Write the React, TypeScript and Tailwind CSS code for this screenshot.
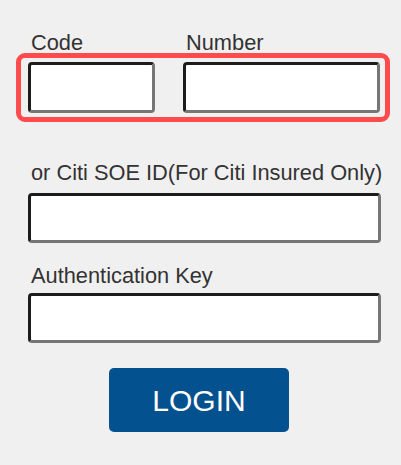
import { useState } from 'react'

const inputCls =
  'block h-[51px] rounded-[4px] border-[3px] border-t-[#1c1c1c] border-l-[#1c1c1c] border-b-[#767676] border-r-[#767676] bg-white px-2 text-[20px] outline-none'

export default function App() {
  const [code, setCode] = useState('')
  const [number, setNumber] = useState('')
  const [soeId, setSoeId] = useState('')
  const [authKey, setAuthKey] = useState('')

  return (
    <div
      className="min-h-[465px] bg-[#f0f0f0] px-4 pt-[31px] text-[#333]"
      style={{ fontFamily: '"Liberation Sans", Arial, sans-serif' }}
    >
      {/* phone */}
      <div className="flex text-[21.8px] leading-[24px]">
        <label className="ml-[15px] w-[155px]">Code</label>
        <label>Number</label>
      </div>
      <div className="-mt-[2px] flex h-[69px] w-[374px] items-center gap-[28px] rounded-[9px] border-[5px] border-[#ff4b4b] pl-[7px]">
        <input
          className={`${inputCls} w-[127px]`}
          value={code}
          onChange={(e) => setCode(e.target.value)}
        />
        <input
          className={`${inputCls} w-[197px]`}
          value={number}
          onChange={(e) => setNumber(e.target.value)}
        />
      </div>

      {/* soe id */}
      <label className="mt-[39px] ml-[15px] block text-[21.8px] leading-[24px]">
        or Citi SOE ID(For Citi Insured Only)
      </label>
      <input
        className={`${inputCls} mt-[8px] ml-[12px] w-[353px] !h-[50px]`}
        value={soeId}
        onChange={(e) => setSoeId(e.target.value)}
      />

      {/* auth key */}
      <label className="mt-[21px] ml-[15px] block text-[21.8px] leading-[24px]">
        Authentication Key
      </label>
      <input
        className={`${inputCls} mt-[5px] ml-[12px] w-[353px] !h-[50px]`}
        value={authKey}
        onChange={(e) => setAuthKey(e.target.value)}
      />

      <div className="mt-[25px] flex justify-center pr-[3px]">
        <button
          type="button"
          className="h-[64px] w-[180px] rounded-[5px] bg-[#04518f] text-[30px] text-white"
        >
          LOGIN
        </button>
      </div>
    </div>
  )
}
